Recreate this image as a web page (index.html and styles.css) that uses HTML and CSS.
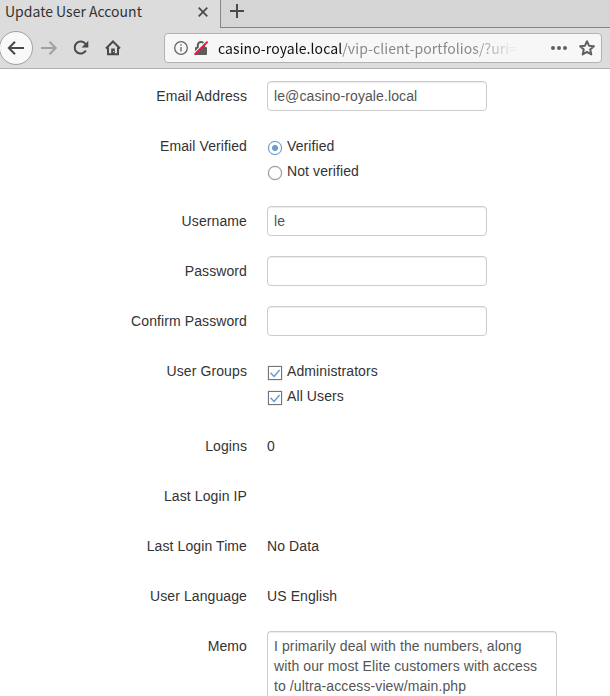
FILE: index.html
```html
<!DOCTYPE html>
<html lang="en">
<head>
<meta charset="utf-8">
<title>Update User Account</title>
<link rel="stylesheet" href="styles.css">
</head>
<body>
<header class="browser">
  <div class="tabs">
    <div class="tab">
      <span class="tab-title">Update User Account</span>
      <svg class="tab-close" width="10" height="10" viewBox="0 0 10 10"><path d="M.7.7l8.6 8.6M9.3.7L.7 9.3"/></svg>
    </div>
    <div class="tab-rest">
      <svg width="14" height="14" viewBox="0 0 14 14"><path d="M7 0v14M0 7h14"/></svg>
    </div>
  </div>
  <div class="toolbar">
    <div class="back"><svg width="18" height="16" viewBox="0 0 18 16"><path d="M17 8H2M8 1.8L1.8 8 8 14.2"/></svg></div>
    <svg class="forward" width="18" height="16" viewBox="0 0 18 16"><path d="M1 8h14.5M9.5 1.8L15.7 8l-6.200 6.200"/></svg>
    <svg class="reload" width="16" height="16" viewBox="0 0 16 16"><path class="line" d="M12.900 10.600A6 6 0 1 1 12.500 4"/><path class="solid" d="M15.300.8v6.700H8.600z"/></svg>
    <svg class="home" width="16" height="16" viewBox="0 0 16 16"><path class="line" d="M1 8.500L8 1.500l7 7M3 7.500V14.200h10V7.500"/><path class="solid" d="M6.200 14V8.500h3.600V14z"/><path class="knob" d="M8 11h1v1H8z"/></svg>
    <div class="urlbar">
      <svg class="info" width="14" height="14" viewBox="0 0 14 14"><circle cx="7" cy="7" r="6.300"/><path d="M7 6v4.500M7 3.300v1.500"/></svg>
      <svg class="lock" width="14" height="14" viewBox="0 0 14 14"><path class="shackle" d="M3.800 7V4.200a3.200 3.200 0 0 1 6.400 0V7"/><rect x="1" y="6" width="12" height="8" rx="1"/><path class="gap" d="M-.5 12.700L12.500-.3"/><path class="slash" d="M.6 13.600L13.600.6"/></svg>
      <span class="url">casino-royale.local<span class="path">/vip-client-portfolios/?uri=</span></span>
      <svg class="dots" width="16" height="4" viewBox="0 0 16 4"><circle cx="2" cy="2" r="2"/><circle cx="8" cy="2" r="2"/><circle cx="14" cy="2" r="2"/></svg>
      <svg class="star" width="16" height="16" viewBox="0 0 16 16"><path d="M8 1.200l2 4.500 4.900.5-3.700 3.300 1.100 4.900L8 11.900l-4.300 2.500 1.100-4.900L1.100 6.200 6 5.700z"/></svg>
    </div>
  </div>
</header>
<main class="form">
  <div class="row"><div class="label">Email Address</div><div class="field input">le@casino-royale.local</div></div>
  <div class="row"><div class="label">Email Verified</div>
    <div class="options">
      <div class="option"><span class="radio checked"></span>Verified</div>
      <div class="option"><span class="radio"></span>Not verified</div>
    </div>
  </div>
  <div class="row"><div class="label">Username</div><div class="field input">le</div></div>
  <div class="row"><div class="label">Password</div><div class="field input"></div></div>
  <div class="row"><div class="label">Confirm Password</div><div class="field input"></div></div>
  <div class="row"><div class="label">User Groups</div>
    <div class="options">
      <div class="option"><span class="checkbox"><svg width="12" height="12" viewBox="0 0 12 12"><path d="M1.500 5.800l3.600 3.700 5.500-6.500"/></svg></span>Administrators</div>
      <div class="option"><span class="checkbox"><svg width="12" height="12" viewBox="0 0 12 12"><path d="M1.500 5.800l3.600 3.700 5.500-6.500"/></svg></span>All Users</div>
    </div>
  </div>
  <div class="row"><div class="label">Logins</div><div class="value">0</div></div>
  <div class="row"><div class="label">Last Login IP</div><div class="value"></div></div>
  <div class="row"><div class="label">Last Login Time</div><div class="value">No Data</div></div>
  <div class="row"><div class="label">User Language</div><div class="value">US English</div></div>
  <div class="row last"><div class="label">Memo</div><div class="field memo">I primarily deal with the numbers, along<br>with our most Elite customers with access<br>to /ultra-access-view/main.php</div></div>
</main>
</body>
</html>
```
FILE: styles.css
```css
* { box-sizing: border-box; }
html, body { height: 100%; }
body {
  margin: 0;
  overflow: hidden;
  background: #fff;
  color: #333;
  font: 14px/20px "Liberation Sans", Arial, sans-serif;
}
svg { display: block; flex: none; overflow: visible; fill: none; stroke: #4a4a4a; stroke-width: 2; }

.browser {
  height: 69px;
  background: #dcdcdc;
  border-bottom: 1px solid #b0b0b0;
  font-family: "Noto Sans CJK SC", "Noto Sans", sans-serif;
}
.tabs { display: flex; height: 28px; }
.tab { display: flex; width: 220px; padding-left: 5px; }
.tab-title { width: 193px; font-size: 14px; line-height: 22px; color: #333; white-space: nowrap; }
.tab-close { margin-top: 7px; stroke-width: 1.7; }
.tab-rest {
  flex: 1;
  padding: 4px 0 0 9px;
  background: #d5d5d5;
  border-left: 1px solid #858585;
  border-bottom: 1px solid #858585;
}
.toolbar { display: flex; align-items: center; height: 40px; }
.back {
  display: flex;
  align-items: center;
  justify-content: center;
  flex: none;
  width: 34px;
  height: 34px;
  margin-left: -1px;
  background: #f9f9f9;
  border: 1px solid #a0a0a0;
  border-radius: 50%;
}
.forward { margin-left: 7px; stroke: #a0a0a0; }
.reload { margin-left: 15px; }
.home { margin-left: 16px; }
.solid { fill: #4a4a4a; stroke: none; }
.knob { fill: #dcdcdc; stroke: none; }
.urlbar {
  display: flex;
  align-items: center;
  width: 438px;
  height: 30px;
  margin-left: 43px;
  padding-left: 9px;
  background: #f7f7f7;
  border: 1px solid #b1b1b1;
  border-radius: 4px;
}
.info { stroke: #666; stroke-width: 1.3; }
.lock { margin-left: 6px; stroke: none; fill: #5c5c5c; }
.lock .shackle { fill: none; stroke: #5c5c5c; stroke-width: 2; }
.lock .gap { stroke: #f7f7f7; stroke-width: 1.5; }
.lock .slash { stroke: #ff0f45; stroke-width: 2; }
.url {
  flex: none;
  width: 303px;
  margin-left: 10px;
  font-size: 14px;
  line-height: 24px;
  letter-spacing: .08px;
  color: #111;
  white-space: nowrap;
  -webkit-mask-image: linear-gradient(to right, #000 255px, transparent 300px);
  mask-image: linear-gradient(to right, #000 255px, transparent 300px);
}
.path { color: #8a8a8a; }
.dots { margin-left: 30px; stroke: none; fill: #606060; }
.star { margin-left: 12px; stroke: #606060; stroke-linejoin: round; }

.form { padding-top: 12px; letter-spacing: .1px; }
.row { display: flex; align-items: flex-start; min-height: 30px; margin-bottom: 20px; }
.row.last { margin-bottom: 0; }
.label { width: 247px; margin-right: 20px; padding-top: 5px; text-align: right; }
.value { padding-top: 5px; }
.field {
  padding: 4px 6px;
  color: #555;
  background: #fff;
  border: 1px solid #ccc;
  border-radius: 4px;
  box-shadow: inset 0 1px 1px rgba(0, 0, 0, .075);
}
.input { width: 220px; height: 30px; }
.memo {
  width: 290px;
  height: 65px;
  border-bottom: 0;
  border-radius: 4px 4px 0 0;
  white-space: nowrap;
}
.options { padding-top: 5px; }
.option { display: flex; height: 20px; margin-bottom: 5px; }
.radio, .checkbox { flex: none; width: 14px; height: 14px; margin: 5px 5px 0 1px; background: #fff; }
.radio { border: 1px solid #929292; border-radius: 50%; box-shadow: 0 0 1px #aaa; }
.radio.checked { border-color: #5b93c5; background: radial-gradient(circle, #6a9fd0 2.700px, #fff 3.300px); }
.checkbox { border: 1px solid #747474; box-shadow: 0 0 1px #999; }
.checkbox svg { stroke: #5c9bd5; stroke-width: 1.4; }
```
